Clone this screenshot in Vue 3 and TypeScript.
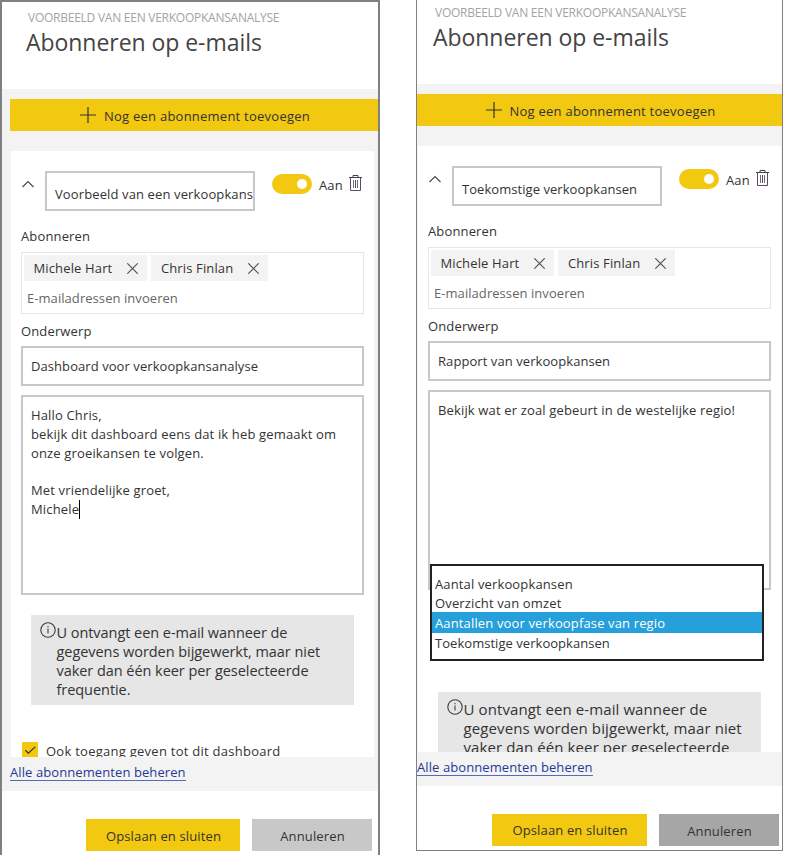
<script setup lang="ts">
interface Subscription {
  id: string
  name: string
  recipients: string[]
  subject: string
  message: string[]
  typing: boolean
  pages: string[]
  selectedPage: string
  grantAccess: boolean
}

const subscriptions: Subscription[] = [
  {
    id: 'dashboard',
    name: 'Voorbeeld van een verkoopkans',
    recipients: ['Michele Hart', 'Chris Finlan'],
    subject: 'Dashboard voor verkoopkansanalyse',
    message: [
      'Hallo Chris,',
      'bekijk dit dashboard eens dat ik heb gemaakt om',
      'onze groeikansen te volgen.',
      '',
      'Met vriendelijke groet,',
      'Michele',
    ],
    typing: true,
    pages: [],
    selectedPage: '',
    grantAccess: true,
  },
  {
    id: 'report',
    name: 'Toekomstige verkoopkansen',
    recipients: ['Michele Hart', 'Chris Finlan'],
    subject: 'Rapport van verkoopkansen',
    message: ['Bekijk wat er zoal gebeurt in de westelijke regio!'],
    typing: false,
    pages: [
      'Aantal verkoopkansen',
      'Overzicht van omzet',
      'Aantallen voor verkoopfase van regio',
      'Toekomstige verkoopkansen',
    ],
    selectedPage: 'Aantallen voor verkoopfase van regio',
    grantAccess: false,
  },
]

const notices: Record<string, string[]> = {
  dashboard: [
    'U ontvangt een e-mail wanneer de',
    'gegevens worden bijgewerkt, maar niet',
    'vaker dan één keer per geselecteerde',
    'frequentie.',
  ],
  report: [
    'U ontvangt een e-mail wanneer de',
    'gegevens worden bijgewerkt, maar niet',
    'vaker dan één keer per geselecteerde',
  ],
}
</script>

<template>
  <main class="page">
    <section v-for="s in subscriptions" :key="s.id" class="panel" :class="s.id">
      <header class="head">
        <div class="caption">VOORBEELD VAN EEN VERKOOPKANSANALYSE</div>
        <h1 class="title">Abonneren op e-mails</h1>
      </header>

      <div class="body">
        <button class="add" type="button">
          <svg width="16" height="16" viewBox="0 0 16 16">
            <path d="M8 0v16M0 8h16" fill="none" stroke="#333" stroke-width="1.2" />
          </svg>
          <span>Nog een abonnement toevoegen</span>
        </button>

        <div class="card">
          <div class="top-row">
            <svg class="chevron" width="12" height="8" viewBox="0 0 12 8">
              <path d="M.5 7 6 1.5 11.5 7" fill="none" stroke="#4a4350" stroke-width="1.1" />
            </svg>
            <div class="field name">{{ s.name }}</div>
            <span class="toggle"><i class="knob"></i></span>
            <span class="state">Aan</span>
            <svg class="trash" width="13" height="16" viewBox="0 0 13 16">
              <path d="M0 2.5h13M4 2.5v-2h5v2" fill="none" stroke="#45404a" />
              <path d="M1.5 2.5v13h10v-13" fill="none" stroke="#5d4a68" />
              <path d="M4.5 5v8M8.5 5v8" stroke="#5f7a5c" />
              <path d="M6.5 5v8" stroke="#7b3a80" />
            </svg>
          </div>

          <div class="label">Abonneren</div>
          <div class="recipients">
            <div class="chips">
              <span v-for="r in s.recipients" :key="r" class="chip">
                <span>{{ r }}</span>
                <svg width="11" height="11" viewBox="0 0 11 11">
                  <path d="M.3.3l10.4 10.4M10.7.3.3 10.7" stroke="#4d4d55" stroke-width="1.1" />
                </svg>
              </span>
            </div>
            <div class="placeholder">E-mailadressen invoeren</div>
          </div>

          <div class="label second">Onderwerp</div>
          <div class="field subject">{{ s.subject }}</div>

          <div class="field message">
            <div v-for="(line, i) in s.message" :key="i" class="line">
              {{ line }}<i v-if="s.typing && i === s.message.length - 1" class="caret"></i>
            </div>
          </div>

          <div v-if="s.pages.length" class="dropdown">
            <div
              v-for="p in s.pages"
              :key="p"
              class="option"
              :class="{ selected: p === s.selectedPage }"
            >{{ p }}</div>
          </div>

          <div class="notice">
            <svg class="info" width="16" height="16" viewBox="0 0 16 16">
              <circle cx="8" cy="8" r="7.2" fill="none" stroke="#3c3c44" stroke-width="1.1" />
              <path d="M8 6.6v5M8 4v1.3" stroke="#4a4a55" stroke-width="1.2" />
            </svg>
            <div class="notice-text">
              <div v-for="n in notices[s.id]" :key="n">{{ n }}</div>
            </div>
          </div>

          <div v-if="s.grantAccess" class="access">
            <span class="check">
              <svg width="16" height="16" viewBox="0 0 16 16">
                <path d="M3.3 8.2 6.4 11.1 13.2 4.9" fill="none" stroke="#333" stroke-width="1.2" />
              </svg>
            </span>
            <span>Ook toegang geven tot dit dashboard</span>
          </div>
        </div>

        <div class="manage"><a class="link">Alle abonnementen beheren</a></div>
      </div>

      <footer class="actions">
        <button class="btn save" type="button">Opslaan en sluiten</button>
        <button class="btn cancel" type="button">Annuleren</button>
      </footer>
    </section>
  </main>
</template>

<style>
body {
  background: #fff;
}
</style>

<style scoped>
* {
  box-sizing: border-box;
}

.page {
  display: flex;
  align-items: flex-start;
  gap: 36px;
  width: 797px;
  height: 855px;
  overflow: hidden;
  font-family: 'Open Sans', 'Noto Sans', sans-serif;
  font-size: 13px;
  line-height: 20px;
  letter-spacing: 0.14px;
  color: #333;
  white-space: nowrap;
}

.page svg {
  display: block;
  flex: none;
}

.panel {
  flex: none;
  background: #fff;
}

.dashboard {
  width: 380px;
  height: 855px;
  border: 2px solid #808080;
  border-bottom: 0;
}

.report {
  width: 367px;
  height: 851px;
  border: 1px solid #808080;
  border-top: 0;
}

.head {
  height: 84px;
  padding: 5px 0 0 16px;
}

.dashboard .head {
  height: 87px;
  padding: 8px 0 0 24px;
}

.caption {
  padding-left: 2px;
  font-size: 12px;
  line-height: 16px;
  letter-spacing: -0.25px;
  color: #a3a3a3;
}

.title {
  margin: 1px 0 0;
  font-size: 23px;
  font-weight: 400;
  line-height: 30px;
  letter-spacing: -0.05px;
  color: #444;
}

.body {
  height: 702px;
  padding-top: 10px;
  background: #f3f3f3;
}

button {
  border: 0;
  margin: 0;
  padding: 0;
  font: inherit;
  letter-spacing: inherit;
  color: inherit;
}

.add {
  display: flex;
  align-items: center;
  justify-content: center;
  gap: 8px;
  width: 100%;
  height: 32px;
  padding-left: 2px;
  background: #f2c811;
  letter-spacing: 0.24px;
}

.add span {
  padding-top: 2px;
}

.dashboard .add {
  width: 368px;
  margin-left: 8px;
}

.card {
  position: relative;
  width: 363px;
  height: 606px;
  margin: 20px 0 0 1px;
  padding: 20px 10px 0;
  overflow: hidden;
  background: #fff;
}

.dashboard .card {
  margin-left: 9px;
}

.top-row {
  display: flex;
  align-items: flex-start;
  height: 55px;
}

.chevron {
  margin: 9px 11px 0 1px;
}

.field {
  border: 2px solid #c8c8c8;
  background: #fff;
  padding-left: 8px;
}

.name {
  flex: none;
  width: 210px;
  height: 40px;
  padding-top: 11px;
  letter-spacing: 0.12px;
  overflow: hidden;
}

.report .name {
  letter-spacing: 0.05px;
}

.toggle {
  flex: none;
  display: flex;
  align-items: center;
  justify-content: flex-end;
  width: 40px;
  height: 20px;
  margin: 3px 7px 0 17px;
  padding-right: 5px;
  border-radius: 10px;
  background: #f2c811;
}

.knob {
  width: 10px;
  height: 10px;
  border-radius: 50%;
  background: #fff;
}

.state {
  width: 30px;
  padding-top: 4px;
}

.trash {
  margin-top: 4px;
}

.label {
  height: 20px;
  margin-bottom: 6px;
}

.second {
  margin: 7px 0 5px;
}

.recipients {
  height: 62px;
  padding: 2px 0 0 2px;
  border: 1px solid #e6e6e6;
}

.chips {
  display: flex;
  gap: 4px;
}

.chip {
  display: flex;
  align-items: center;
  gap: 15px;
  height: 26px;
  padding: 0 9px 0 9.5px;
  background: #f3f3f3;
}

.placeholder {
  margin-top: 7px;
  padding-left: 3px;
  letter-spacing: 0.06px;
  color: #666;
}

.subject {
  height: 40px;
  padding-top: 8px;
  letter-spacing: 0.07px;
}

.message {
  height: 200px;
  margin-top: 9px;
  padding-top: 9px;
  letter-spacing: 0.15px;
}

.line {
  height: 18.75px;
  line-height: 18.75px;
}

.caret {
  display: inline-block;
  width: 1px;
  height: 19px;
  vertical-align: -5px;
  background: #000;
}

.dropdown {
  position: absolute;
  top: 418px;
  left: 12px;
  width: 334px;
  height: 97px;
  padding-top: 8px;
  border: 2px solid #222;
  background: #fff;
}

.option {
  height: 19px;
  padding: 1px 0 0 3px;
  line-height: 18px;
}

.option:last-child {
  letter-spacing: 0.04px;
}

.selected {
  height: 21px;
  line-height: 20px;
  background: #26a0da;
  color: #fff;
}

.notice {
  display: flex;
  width: 323px;
  height: 90px;
  margin: 20px 0 0 10px;
  padding-left: 8.5px;
  background: #e6e6e6;
}

.report .notice {
  height: 60px;
  margin-top: 102px;
}

.info {
  margin: 7px 1px 0 0;
}

.notice-text {
  padding-top: 7.5px;
  font-size: 14.5px;
  line-height: 19.3px;
  letter-spacing: -0.05px;
}

.report .notice-text {
  font-size: 15px;
  letter-spacing: 0.1px;
}

.access {
  display: flex;
  align-items: flex-start;
  gap: 8px;
  margin: 37px 0 0 1px;
  letter-spacing: 0.26px;
}

.access > span:last-child {
  margin-top: -1px;
}

.check {
  width: 16px;
  height: 16px;
  background: #f2c811;
}

.manage {
  display: flex;
  height: 34px;
  padding-top: 5px;
}

.dashboard .manage {
  padding-left: 8px;
}

.link {
  height: 19px;
  border-bottom: 1px solid #5a69b5;
  letter-spacing: 0.09px;
  color: #1f3a93;
}

.actions {
  display: flex;
  justify-content: flex-end;
  gap: 12px;
  padding: 28px 3px 0 0;
}

.dashboard .actions {
  padding-right: 6px;
}

.btn {
  height: 32px;
  padding-left: 1px;
  text-align: center;
  line-height: 20px;
}

.save {
  width: 155px;
  background: #f2c811;
}

.dashboard .save {
  width: 154px;
  padding-top: 2px;
}

.cancel {
  width: 120px;
  padding-top: 2px;
  background: #a6a6a6;
}

.dashboard .cancel {
  background: #c8c8c8;
}
</style>
